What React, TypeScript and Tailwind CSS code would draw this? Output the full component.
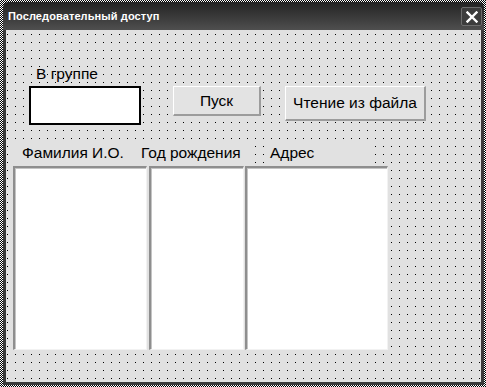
const dots =
  'bg-[linear-gradient(to_bottom,#e1e1e1_7px,transparent_7px),linear-gradient(to_right,#000_1px,#e1e1e1_1px)] [background-size:8px_8px] [background-position:1px_5px]';

export default function App() {
  return (
    <div
      className="w-[486px] h-[387px] pt-[2px] pl-[3px] pr-[2px] pb-[2px] bg-[repeating-conic-gradient(#000_0_25%,#fff_0_50%)] [background-size:2px_2px]"
      style={{ fontFamily: '"Liberation Sans", Arial, sans-serif' }}
    >
      <div className="flex flex-col h-full rounded-t-[6px] bg-[#3b3b3b] overflow-hidden">
        <TitleBar />
        <div className={`flex-1 ml-[3px] mr-[3px] mb-[3px] text-[15.5px] text-black ${dots}`}>
          <div className="mt-[35px] ml-[30px] h-[17px] leading-[17px]">В группе</div>
          <div className="mt-[4px] flex items-start">
            <div className="ml-[23px] w-[112px] h-[39px] bg-white border-2 border-black" />
            <Button className="ml-[32px] w-[88px] h-[30px]">Пуск</Button>
            <Button className="ml-[24px] w-[141px] h-[35px]">Чтение из файла</Button>
          </div>
          <div className="mt-[17px] ml-[7px] flex h-[24px] leading-[22px]">
            <div className="w-[124px] pl-[9px] bg-[#e1e1e1]">Фамилия И.О.</div>
            <div className="w-[111px] pl-[4px] bg-[#e1e1e1]">Год рождения</div>
            <div className="ml-[17px] w-[105px] pl-[5px] bg-[#e1e1e1]">Адрес</div>
          </div>
          <div className="ml-[7px] flex h-[184px] gap-[2px]">
            <ListBox className="w-[134px]" />
            <ListBox className="w-[95px]" />
            <ListBox className="w-[143px] -ml-px" />
          </div>
        </div>
      </div>
    </div>
  );
}

function TitleBar() {
  return (
    <div className="h-[28px] flex items-center justify-between pl-[5px] pr-[2px] bg-linear-to-b from-[#242424] to-[#4f4f4f]">
      <span className="text-white font-bold text-[11px] tracking-[0.1px]">Последовательный доступ</span>
      <div className="w-[21px] h-[19px] mt-[1px] flex items-center justify-center rounded-[2px] border border-[#6c6c6c] bg-[#3c3c3c]">
        <svg width="12" height="12" viewBox="0 0 12 12">
          <path d="M1.5 1.5 L10.5 10.5 M10.5 1.5 L1.5 10.5" stroke="#fff" strokeWidth="2.4" strokeLinecap="square" />
        </svg>
      </div>
    </div>
  );
}

function Button({ className, children }: { className: string; children: string }) {
  return (
    <div
      className={`${className} flex items-center justify-center bg-[#e3e3e3] border-t border-l border-t-white border-l-white border-r-2 border-b-2 border-r-[#9c9c9c] border-b-[#9c9c9c]`}
    >
      {children}
    </div>
  );
}

function ListBox({ className }: { className: string }) {
  return (
    <div
      className={`${className} h-full bg-white border-t-2 border-l-2 border-t-[#8e8e8e] border-l-[#8e8e8e] border-r border-b border-r-[#f2f2f2] border-b-[#f2f2f2] shadow-[inset_1px_1px_0_#c4c4c4]`}
    />
  );
}
